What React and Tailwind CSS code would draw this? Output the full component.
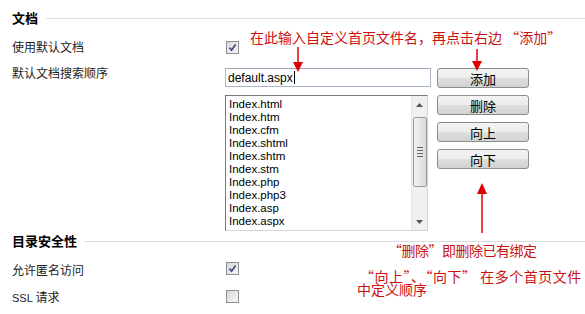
import React from "react";

const files = [
  "Index.html",
  "Index.htm",
  "Index.cfm",
  "Index.shtml",
  "Index.shtm",
  "Index.stm",
  "Index.php",
  "Index.php3",
  "Index.asp",
  "Index.aspx",
];

function CheckBox({ checked }) {
  return (
    <div className="w-[13px] h-[13px] border border-[#8e8f8f] bg-[linear-gradient(135deg,#d8d8d8,#f7f7f7)] flex items-center justify-center">
      {checked && (
        <svg width="9" height="9" viewBox="0 0 9 9">
          <path d="M1.5 4.6 L3.6 7.2 L7.6 1.4" fill="none" stroke="#3b4d7e" strokeWidth="1.7" />
        </svg>
      )}
    </div>
  );
}

function Btn({ children }) {
  return (
    <button className="w-[92px] h-[20px] rounded-[3px] border border-[#8c8c8c] bg-[linear-gradient(#f3f3f3_0%,#ececec_50%,#dedede_52%,#d2d2d2_100%)] text-[13px] leading-none text-black font-['Noto_Sans_CJK_SC',sans-serif]">
      {children}
    </button>
  );
}

function SectionTitle({ title, gap }) {
  return (
    <div className="flex items-center h-full pl-3">
      <span className="font-bold text-[13px] text-black">{title}</span>
      <div className={`flex-1 h-px bg-[#dcdcdc] ${gap}`} />
    </div>
  );
}

function Scrollbar() {
  return (
    <div className="w-[16px] h-full bg-[#f0f0f0] border-l border-[#e6e6e6] flex flex-col items-center">
      <div className="h-[17px] w-full flex items-center justify-center">
        <svg width="7" height="4" viewBox="0 0 7 4"><path d="M0 4 L3.5 0 L7 4 Z" fill="#555" /></svg>
      </div>
      <div className="mt-[4px] w-[14px] h-[70px] rounded-[2px] border border-[#979797] bg-[linear-gradient(90deg,#f2f2f2,#dcdcdc)] flex flex-col items-center justify-center gap-[2px]">
        <div className="w-[6px] h-px bg-[#666]" />
        <div className="w-[6px] h-px bg-[#666]" />
        <div className="w-[6px] h-px bg-[#666]" />
        <div className="w-[6px] h-px bg-[#666]" />
      </div>
      <div className="flex-1" />
      <div className="h-[17px] w-full flex items-center justify-center">
        <svg width="7" height="4" viewBox="0 0 7 4"><path d="M0 0 L3.5 4 L7 0 Z" fill="#555" /></svg>
      </div>
    </div>
  );
}

export default function App() {
  return (
    <div className="relative w-[585px] h-[314px] bg-white overflow-hidden text-[12px] text-[#222] font-['Noto_Sans_CJK_SC',sans-serif]">
      {/* 文档 */}
      <div className="h-[36px]">
        <SectionTitle title="文档" gap="ml-[8px]" />
      </div>

      <div className="flex h-[27px] items-start">
        <div className="w-[225px] shrink-0 pl-3 leading-[22px]">使用默认文档</div>
        <div className="mt-[5px] ml-[1px]">
          <CheckBox checked />
        </div>
      </div>

      <div className="flex items-start">
        <div className="w-[225px] shrink-0 pl-3 leading-[20px]">默认文档搜索顺序</div>
        <div className="pt-[5px]">
          <div className="flex gap-[6px] items-start">
            <div className="w-[206px] h-[19px] border border-[#abb7c6] border-t-[#9aa6b6] flex items-center pl-[2px] text-[12px] text-black font-['Liberation_Sans',sans-serif]">
              default.aspx
              <span className="inline-block w-px h-[13px] bg-black ml-[1px]" />
            </div>
            <Btn>添加</Btn>
          </div>
          <div className="flex gap-[9px] mt-[7px] items-start">
            <div className="w-[203px] h-[136px] border border-[#7a7a7a] border-b-[#d6d6d6] border-r-[#d6d6d6] flex">
              <div className="flex-1 pl-[3px] pt-[2px] text-[11.5px] leading-[13px] text-black font-['Liberation_Sans',sans-serif]">
                {files.map((f) => (
                  <div key={f}>{f}</div>
                ))}
              </div>
              <Scrollbar />
            </div>
            <div className="flex flex-col gap-[7px]">
              <Btn>删除</Btn>
              <Btn>向上</Btn>
              <Btn>向下</Btn>
            </div>
          </div>
        </div>
      </div>

      {/* 目录安全性 */}
      <div className="h-[20px]">
        <SectionTitle title="目录安全性" gap="ml-[7px]" />
      </div>

      <div className="flex h-[28px] items-start">
        <div className="w-[225px] shrink-0 pl-3 leading-[22px] mt-[8px]">允许匿名访问</div>
        <div className="mt-[11px] ml-[1px]">
          <CheckBox checked />
        </div>
      </div>
      <div className="flex h-[28px] items-start">
        <div className="w-[225px] shrink-0 pl-3 leading-[22px] mt-[7px]">
          <span className="font-['Liberation_Sans',sans-serif] text-[11px]">SSL</span> 请求
        </div>
        <div className="mt-[11px] ml-[1px]">
          <CheckBox />
        </div>
      </div>

      {/* annotations */}
      <svg className="absolute inset-0 pointer-events-none" width="585" height="314">
        <line x1="298" y1="47" x2="298" y2="63" stroke="#e00000" strokeWidth="1.5" />
        <polygon points="293,62 303,62 298,72" fill="#e00000" />
        <line x1="477" y1="49" x2="477" y2="62" stroke="#e00000" strokeWidth="1.5" />
        <polygon points="472,61 482,61 477,71" fill="#e00000" />
        <polygon points="477,194 487,194 482,183" fill="#e00000" />
        <line x1="482" y1="193" x2="482" y2="233" stroke="#e00000" strokeWidth="1.5" />
      </svg>
      <div className="absolute left-[250px] top-[29px] text-[14px] leading-[17px] text-[#cc1010] whitespace-nowrap">
        在此输入自定义首页文件名，再点击右边 “添加”
      </div>
      <div className="absolute left-[388px] top-[243px] text-[14px] leading-[15px] tracking-[-0.5px] text-[#cc1010] whitespace-nowrap">
        “删除”即删除已有绑定
      </div>
      <div className="absolute left-[360px] top-[270px] text-[14px] leading-[13px] tracking-[0.5px] text-[#cc1010] whitespace-nowrap">
        “向上”、“向下” 在多个首页文件
      </div>
      <div className="absolute left-[357px] top-[283px] text-[14px] leading-[13px] text-[#cc1010] whitespace-nowrap">
        中定义顺序
      </div>
    </div>
  );
}
